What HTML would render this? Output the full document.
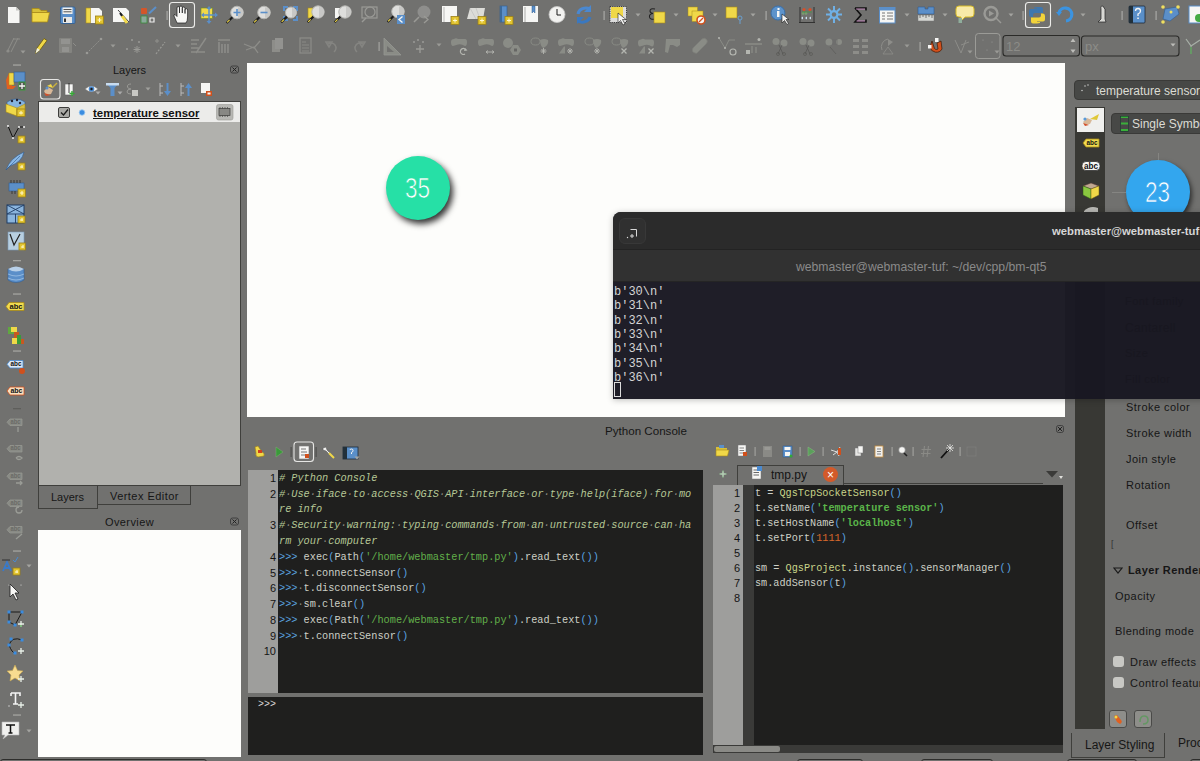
<!DOCTYPE html><html><head><meta charset="utf-8"><style>
html,body{margin:0;padding:0}
body{width:1200px;height:761px;overflow:hidden;position:relative;background:#71716f;font-family:"Liberation Sans",sans-serif}
body div,body svg{position:absolute}
span{position:static}
.t{white-space:pre;line-height:1}
.m{font-family:"Liberation Mono",monospace}
</style></head><body>
<div style="left:247px;top:63px;width:818px;height:354px;background:#fdfdfb"></div>
<div class="t" style="left:113px;top:65px;font-size:11px;color:#161616">Layers</div>
<div style="left:38px;top:101px;width:203px;height:385px;background:#b1b1ad;border:1px solid #3f3f3c;box-sizing:border-box"></div>
<div style="left:39px;top:102px;width:201px;height:20px;background:#ececea"></div>
<div style="left:58px;top:107px;width:12px;height:11px;background:#a9a9a5;border:1px solid #3c3c3a;border-radius:2px;box-sizing:border-box"></div>
<div class="t" style="left:93px;top:108px;font-size:11.4px;font-weight:bold;color:#111;text-decoration:underline">temperature sensor</div>
<div style="left:38px;top:485px;width:60px;height:24px;border:1px solid #3f3f3c;box-sizing:border-box;background:#71716f"></div>
<div class="t" style="left:51px;top:492px;font-size:11px;color:#161616">Layers</div>
<div style="left:97px;top:485px;width:94px;height:20px;border:1px solid #3f3f3c;box-sizing:border-box;background:#71716f"></div>
<div class="t" style="left:110px;top:491px;font-size:11px;color:#161616;letter-spacing:.45px">Vertex Editor</div>
<div class="t" style="left:105px;top:517px;font-size:11px;color:#161616;letter-spacing:.4px">Overview</div>
<div style="left:38px;top:530px;width:203px;height:227px;background:#fdfdfb"></div>
<div class="t" style="left:605px;top:425px;font-size:11.6px;color:#161616">Python Console</div>
<div style="left:248px;top:470px;width:455px;height:223px;background:#1f1f1e"></div>
<div style="left:248px;top:470px;width:30px;height:223px;background:#9e9e9c"></div>
<div style="left:248px;top:697px;width:455px;height:58px;background:#1f1f1e"></div>
<div style="left:713px;top:485px;width:30px;height:260px;background:#9e9e9c"></div>
<div style="left:743px;top:485px;width:11px;height:260px;background:#3a3a38"></div>
<div style="left:754px;top:485px;width:309px;height:260px;background:#1f1f1e"></div>
<div style="left:713px;top:745px;width:350px;height:8px;background:#3a3a38"></div>
<div style="left:714px;top:746px;width:66px;height:6px;background:#8a8a86;border-radius:2px"></div>
<div class="t" style="left:279px;top:473px;font-size:10.25px;font-family:'Liberation Mono',monospace"><span style="color:#b6c896;font-style:italic"># Python Console</span></div>
<div class="t" style="left:279px;top:489px;font-size:10.25px;font-family:'Liberation Mono',monospace"><span style="color:#b6c896;font-style:italic">#<span style="color:#8a8a80">·</span>Use<span style="color:#8a8a80">·</span>iface<span style="color:#8a8a80">·</span>to<span style="color:#8a8a80">·</span>access<span style="color:#8a8a80">·</span>QGIS<span style="color:#8a8a80">·</span>API<span style="color:#8a8a80">·</span>interface<span style="color:#8a8a80">·</span>or<span style="color:#8a8a80">·</span>type<span style="color:#8a8a80">·</span>help(iface)<span style="color:#8a8a80">·</span>for<span style="color:#8a8a80">·</span>mo</span></div>
<div class="t" style="left:279px;top:504px;font-size:10.25px;font-family:'Liberation Mono',monospace"><span style="color:#b6c896;font-style:italic">re info</span></div>
<div class="t" style="left:279px;top:520px;font-size:10.25px;font-family:'Liberation Mono',monospace"><span style="color:#b6c896;font-style:italic">#<span style="color:#8a8a80">·</span>Security<span style="color:#8a8a80">·</span>warning:<span style="color:#8a8a80">·</span>typing<span style="color:#8a8a80">·</span>commands<span style="color:#8a8a80">·</span>from<span style="color:#8a8a80">·</span>an<span style="color:#8a8a80">·</span>untrusted<span style="color:#8a8a80">·</span>source<span style="color:#8a8a80">·</span>can<span style="color:#8a8a80">·</span>ha</span></div>
<div class="t" style="left:279px;top:536px;font-size:10.25px;font-family:'Liberation Mono',monospace"><span style="color:#b6c896;font-style:italic">rm your</span><span style="color:#8a8a80">·</span><span style="color:#b6c896;font-style:italic">computer</span></div>
<div class="t" style="left:279px;top:552px;font-size:10.25px;font-family:'Liberation Mono',monospace"><span style="color:#5aa3e0">&gt;&gt;&gt;</span> <span style="color:#cdd0c6">exec</span><span style="color:#5aa3e0">(</span><span style="color:#cdd0c6">Path</span><span style="color:#5aa3e0">(</span><span style="color:#62b04a">'/home/webmaster/tmp.py'</span><span style="color:#5aa3e0">)</span><span style="color:#cdd0c6">.read_text</span><span style="color:#5aa3e0">())</span></div>
<div class="t" style="left:279px;top:568px;font-size:10.25px;font-family:'Liberation Mono',monospace"><span style="color:#5aa3e0">&gt;&gt;&gt;</span><span style="color:#8a8a80">·</span><span style="color:#cdd0c6">t.connectSensor</span><span style="color:#5aa3e0">()</span></div>
<div class="t" style="left:279px;top:583px;font-size:10.25px;font-family:'Liberation Mono',monospace"><span style="color:#5aa3e0">&gt;&gt;&gt;</span><span style="color:#8a8a80">·</span><span style="color:#cdd0c6">t.disconnectSensor</span><span style="color:#5aa3e0">()</span></div>
<div class="t" style="left:279px;top:599px;font-size:10.25px;font-family:'Liberation Mono',monospace"><span style="color:#5aa3e0">&gt;&gt;&gt;</span><span style="color:#8a8a80">·</span><span style="color:#cdd0c6">sm.clear</span><span style="color:#5aa3e0">()</span></div>
<div class="t" style="left:279px;top:615px;font-size:10.25px;font-family:'Liberation Mono',monospace"><span style="color:#5aa3e0">&gt;&gt;&gt;</span> <span style="color:#cdd0c6">exec</span><span style="color:#5aa3e0">(</span><span style="color:#cdd0c6">Path</span><span style="color:#5aa3e0">(</span><span style="color:#62b04a">'/home/webmaster/tmp.py'</span><span style="color:#5aa3e0">)</span><span style="color:#cdd0c6">.read_text</span><span style="color:#5aa3e0">())</span></div>
<div class="t" style="left:279px;top:631px;font-size:10.25px;font-family:'Liberation Mono',monospace"><span style="color:#5aa3e0">&gt;&gt;&gt;</span><span style="color:#8a8a80">·</span><span style="color:#cdd0c6">t.connectSensor</span><span style="color:#5aa3e0">()</span></div>
<div class="t" style="left:248px;top:473px;width:28px;text-align:right;font-size:11px;color:#141414">1</div>
<div class="t" style="left:248px;top:489px;width:28px;text-align:right;font-size:11px;color:#141414">2</div>
<div class="t" style="left:248px;top:520px;width:28px;text-align:right;font-size:11px;color:#141414">3</div>
<div class="t" style="left:248px;top:552px;width:28px;text-align:right;font-size:11px;color:#141414">4</div>
<div class="t" style="left:248px;top:568px;width:28px;text-align:right;font-size:11px;color:#141414">5</div>
<div class="t" style="left:248px;top:583px;width:28px;text-align:right;font-size:11px;color:#141414">6</div>
<div class="t" style="left:248px;top:599px;width:28px;text-align:right;font-size:11px;color:#141414">7</div>
<div class="t" style="left:248px;top:615px;width:28px;text-align:right;font-size:11px;color:#141414">8</div>
<div class="t" style="left:248px;top:631px;width:28px;text-align:right;font-size:11px;color:#141414">9</div>
<div class="t" style="left:248px;top:646px;width:28px;text-align:right;font-size:11px;color:#141414">10</div>
<div class="t" style="left:258px;top:700px;font-size:10px;color:#d8d8d8;font-family:'Liberation Mono',monospace">&gt;&gt;&gt;</div>
<div class="t" style="left:755px;top:489px;font-size:10.2px;font-family:'Liberation Mono',monospace"><span style="color:#cdd0c6">t</span> <span style="color:#cdd0c6">=</span> <span style="color:#c9d58a">QgsTcpSocketSensor</span><span style="color:#5aa3e0">()</span></div>
<div class="t" style="left:755px;top:504px;font-size:10.2px;font-family:'Liberation Mono',monospace"><span style="color:#cdd0c6">t.setName</span><span style="color:#5aa3e0">(</span><span style="color:#5bb54a;font-weight:bold">'temperature sensor'</span><span style="color:#5aa3e0">)</span></div>
<div class="t" style="left:755px;top:519px;font-size:10.2px;font-family:'Liberation Mono',monospace"><span style="color:#cdd0c6">t.setHostName</span><span style="color:#5aa3e0">(</span><span style="color:#5bb54a;font-weight:bold">'localhost'</span><span style="color:#5aa3e0">)</span></div>
<div class="t" style="left:755px;top:534px;font-size:10.2px;font-family:'Liberation Mono',monospace"><span style="color:#cdd0c6">t.setPort</span><span style="color:#5aa3e0">(</span><span style="color:#d9692c">1111</span><span style="color:#5aa3e0">)</span></div>
<div class="t" style="left:755px;top:564px;font-size:10.2px;font-family:'Liberation Mono',monospace"><span style="color:#cdd0c6">sm</span> <span style="color:#cdd0c6">=</span> <span style="color:#c9d58a">QgsProject</span><span style="color:#cdd0c6">.instance</span><span style="color:#5aa3e0">()</span><span style="color:#cdd0c6">.sensorManager</span><span style="color:#5aa3e0">()</span></div>
<div class="t" style="left:755px;top:579px;font-size:10.2px;font-family:'Liberation Mono',monospace"><span style="color:#cdd0c6">sm.addSensor</span><span style="color:#5aa3e0">(</span><span style="color:#cdd0c6">t</span><span style="color:#5aa3e0">)</span></div>
<div class="t" style="left:713px;top:488px;width:27px;text-align:right;font-size:11px;color:#141414">1</div>
<div class="t" style="left:713px;top:503px;width:27px;text-align:right;font-size:11px;color:#141414">2</div>
<div class="t" style="left:713px;top:518px;width:27px;text-align:right;font-size:11px;color:#141414">3</div>
<div class="t" style="left:713px;top:533px;width:27px;text-align:right;font-size:11px;color:#141414">4</div>
<div class="t" style="left:713px;top:548px;width:27px;text-align:right;font-size:11px;color:#141414">5</div>
<div class="t" style="left:713px;top:563px;width:27px;text-align:right;font-size:11px;color:#141414">6</div>
<div class="t" style="left:713px;top:578px;width:27px;text-align:right;font-size:11px;color:#141414">7</div>
<div class="t" style="left:713px;top:593px;width:27px;text-align:right;font-size:11px;color:#141414">8</div>
<div style="left:737px;top:465px;width:107px;height:20px;border:1px solid #3f3f3c;border-bottom:none;box-sizing:border-box;background:#71716f"></div>
<div class="t" style="left:771px;top:469px;font-size:12px;color:#141414">tmp.py</div>
<div style="left:823px;top:467px;width:15px;height:15px;border-radius:50%;background:#d35a2a"></div>
<div class="t" style="left:827px;top:469px;font-size:12px;color:#fff">×</div>
<div style="left:843px;top:483px;width:200px;height:1px;background:#3f3f3c"></div>
<div style="left:1074px;top:80px;width:140px;height:20px;background:#474846;border:1px solid #3a3a38;border-radius:4px;box-sizing:border-box"></div>
<div class="t" style="left:1096px;top:85px;font-size:12px;color:#dcdcd4">temperature sensor</div>
<div style="left:1075px;top:107px;width:30px;height:622px;background:#383834"></div>
<div style="left:1077px;top:108px;width:27px;height:24px;background:#f0f0ee"></div>
<div style="left:1111px;top:113px;width:100px;height:21px;background:#474846;border:1px solid #3a3a38;border-radius:4px;box-sizing:border-box"></div>
<div class="t" style="left:1132px;top:118px;font-size:12px;color:#dcdcd4">Single Symbol</div>
<div style="left:1126px;top:160px;width:64px;height:64px;border-radius:50%;background:#33a6ee;box-shadow:2px 3px 5px rgba(0,0,0,.6)"></div>
<div class="t" style="left:1145px;top:177px;font-size:30px;color:#fff;-webkit-text-stroke:.7px #33a6ee;transform:scaleX(.75);transform-origin:0 0">23</div>
<div class="t" style="left:1126px;top:402px;font-size:11px;color:#161616;letter-spacing:.45px">Stroke color</div>
<div class="t" style="left:1126px;top:428px;font-size:11px;color:#161616;letter-spacing:.45px">Stroke width</div>
<div class="t" style="left:1126px;top:454px;font-size:11px;color:#161616;letter-spacing:.45px">Join style</div>
<div class="t" style="left:1126px;top:480px;font-size:11px;color:#161616;letter-spacing:.45px">Rotation</div>
<div class="t" style="left:1126px;top:520px;font-size:11px;color:#161616;letter-spacing:.45px">Offset</div>
<div class="t" style="left:1128px;top:565px;font-size:11px;font-weight:bold;color:#161616;letter-spacing:.4px">Layer Rendering</div>
<svg style="left:1113px;top:567px;" width="10" height="8" viewBox="0 0 10 8"><path d="M1 1H9L5 6Z" fill="none" stroke="#1a1a1a" stroke-width="1.2"/></svg>
<div class="t" style="left:1115px;top:591px;font-size:11px;color:#161616;letter-spacing:.45px">Opacity</div>
<div class="t" style="left:1115px;top:626px;font-size:11px;color:#161616;letter-spacing:.45px">Blending mode</div>
<div style="left:1113px;top:656px;width:11px;height:11px;background:#c8c8c4;border-radius:3px"></div>
<div class="t" style="left:1130px;top:657px;font-size:11px;color:#161616;letter-spacing:.45px">Draw effects</div>
<div style="left:1113px;top:677px;width:11px;height:11px;background:#c8c8c4;border-radius:3px"></div>
<div class="t" style="left:1130px;top:678px;font-size:11px;color:#161616;letter-spacing:.45px">Control feature rendering order</div>
<div style="left:1109px;top:710px;width:18px;height:18px;background:#8e8e8a;border:1px solid #4a4a48;border-radius:3px;box-sizing:border-box"></div>
<div style="left:1134px;top:710px;width:18px;height:18px;background:#8e8e8a;border:1px solid #4a4a48;border-radius:3px;box-sizing:border-box"></div>
<div style="left:1071px;top:733px;width:94px;height:25px;border:1px solid #3f3f3c;border-top:none;box-sizing:border-box"></div>
<div class="t" style="left:1085px;top:739px;font-size:12px;color:#161616">Layer Styling</div>
<div class="t" style="left:1178px;top:737px;font-size:12px;color:#161616">Processing</div>
<svg style="left:0;top:0" width="1200" height="761"><path d="M8 7H16L19.5 10.5V23H8Z" fill="#f6f6f4" /><path d="M16 7V10.5H19.5Z" fill="#c8c8c4" /><path d="M32 8.5H39L41 10.5H47V12.5H32Z" fill="#d8c038" stroke="#a88a18" stroke-width="0.8" /><path d="M32 12.5H49.5L47.5 22H32Z" fill="#f0d848" stroke="#a88a18" stroke-width="0.8" /><rect x="60.5" y="7" width="14.5" height="16.5" rx="1" fill="#5b8fc9" stroke="#2f5d92" stroke-width="0.8" /><rect x="62.5" y="7.5" width="10" height="6.5" rx="0" fill="#f0f0ee" /><line x1="63.5" y1="9.5" x2="71.5" y2="9.5" stroke="#555" stroke-width="1" /><line x1="63.5" y1="11.8" x2="71.5" y2="11.8" stroke="#555" stroke-width="1" /><rect x="63" y="17" width="9" height="6" rx="0" fill="#e8e8e6" /><rect x="64" y="18.5" width="2" height="3.5" rx="0" fill="#333" /><path d="M86 8H99L102 11V23H86Z" fill="#f6f6f4" /><rect x="86" y="8" width="4.5" height="15" rx="0" fill="#f0d848" stroke="#a88a18" stroke-width="0.6" /><rect x="95.5" y="16" width="8" height="8" rx="0" fill="#e2c430" stroke="#9c8018" stroke-width="0.8" /><path d="M97.5 20H101.5M99.5 18V22" fill="none" stroke="#fff8d0" stroke-width="1" /><path d="M113 8H126L129 11V22H113Z" fill="#f6f6f4" /><path d="M118 10L129 22" fill="none" stroke="#444" stroke-width="1" /><line x1="122" y1="16" x2="127" y2="23" stroke="#f0d848" stroke-width="3" /><line x1="120" y1="13" x2="122" y2="16" stroke="#1a1a1a" stroke-width="2" /><rect x="141" y="8" width="6" height="6" rx="1" fill="#d3562a" /><line x1="149" y1="13.5" x2="156" y2="7" stroke="#5b8fc9" stroke-width="2" /><rect x="141" y="16" width="6" height="7" rx="0" fill="#8aa89a" stroke="#3b8c3b" stroke-width="0.8" /><path d="M150 18h4v4h-4z" fill="none" stroke="#eee" stroke-width="1.2" /><rect x="166.5" y="11" width="1.2" height="9" rx="0" fill="#a9a9a5" /><rect x="169.5" y="2.5" width="25" height="25" rx="3" fill="none" stroke="#ececea" stroke-width="1.1" /><path d="M177 23L174 16Q173.5 14.5 175 14.5L177 16.5V8Q177 6.5 178.3 6.5Q179.5 6.5 179.5 8V13V7.5Q179.5 6 181 6Q182.3 6 182.3 7.5V13V8.5Q182.3 7 183.6 7Q185 7 185 8.5V13.5V10Q185 8.7 186.3 8.7Q187.6 8.7 187.6 10V17Q187.6 21 186 23Z" fill="#f6f6f4" stroke="#1a1a1a" stroke-width="0.7" /><rect x="201" y="8" width="11.5" height="10.5" rx="0" fill="#f0d848" stroke="#6a8a20" stroke-width="0.6" /><path d="M209 6L211.5 9H206.5ZM209 24L211.5 21H206.5ZM201 15L204 12.5V17.5ZM218 15L215 12.5V17.5Z" fill="#5b8fc9" /><line x1="209" y1="8" x2="209" y2="22" stroke="#5b8fc9" stroke-width="1.5" /><line x1="202" y1="15" x2="216" y2="15" stroke="#5b8fc9" stroke-width="1.5" /><line x1="226.59" y1="22.91" x2="232.59" y2="16.91" stroke="#1a1a1a" stroke-width="2.2" /><line x1="227.09" y1="22.41" x2="229.59" y2="19.91" stroke="#f0d848" stroke-width="1.2" /><circle cx="237" cy="12.5" r="6.3" fill="#dededc" stroke="#b4b4b0" stroke-width="1"/><path d="M238 7.2A5.3 5.3 0 0 1 238 17.8Z" fill="#c8c8c6" /><path d="M233.5 12.5H240.5M237 9V16" fill="none" stroke="#5b8fc9" stroke-width="1.6" /><line x1="253.58999999999997" y1="22.91" x2="259.59" y2="16.91" stroke="#1a1a1a" stroke-width="2.2" /><line x1="254.08999999999997" y1="22.41" x2="256.59" y2="19.91" stroke="#f0d848" stroke-width="1.2" /><circle cx="264" cy="12.5" r="6.3" fill="#dededc" stroke="#b4b4b0" stroke-width="1"/><path d="M265 7.2A5.3 5.3 0 0 1 265 17.8Z" fill="#c8c8c6" /><path d="M260.5 12.5H267.5" fill="none" stroke="#5b8fc9" stroke-width="1.6" /><path d="M283 6H288V8H285V11H283ZM298 6H293V8H296V11H298ZM283 21H288V19H285V16H283ZM298 21H293V19H296V16H298Z" fill="#5b8fc9" /><line x1="281.15" y1="22.35" x2="287.15" y2="16.35" stroke="#1a1a1a" stroke-width="2.2" /><line x1="281.65" y1="21.85" x2="284.15" y2="19.35" stroke="#f0d848" stroke-width="1.2" /><circle cx="291" cy="12.5" r="5.5" fill="#dededc" stroke="#b4b4b0" stroke-width="1"/><path d="M292 8.0A4.5 4.5 0 0 1 292 17.0Z" fill="#c8c8c6" /><rect x="308" y="8" width="5" height="10" rx="0" fill="#f0d848" stroke="#a88a18" stroke-width="0.6" /><line x1="307.66" y1="22.34" x2="313.66" y2="16.34" stroke="#1a1a1a" stroke-width="2.2" /><line x1="308.16" y1="21.84" x2="310.66" y2="19.34" stroke="#f0d848" stroke-width="1.2" /><circle cx="318" cy="12" r="6.2" fill="#dededc" stroke="#b4b4b0" stroke-width="1"/><path d="M319 6.8A5.2 5.2 0 0 1 319 17.2Z" fill="#c8c8c6" /><rect x="335" y="8" width="5" height="10" rx="0" fill="#f6f6f4" /><line x1="334.66" y1="22.34" x2="340.66" y2="16.34" stroke="#1a1a1a" stroke-width="2.2" /><line x1="335.16" y1="21.84" x2="337.66" y2="19.34" stroke="#f0d848" stroke-width="1.2" /><circle cx="345" cy="12" r="6.2" fill="#dededc" stroke="#b4b4b0" stroke-width="1"/><path d="M346 6.8A5.2 5.2 0 0 1 346 17.2Z" fill="#c8c8c6" /><rect x="362" y="7" width="15" height="11" rx="0" fill="none" stroke="#9a9a96" stroke-width="1.2" /><circle cx="370" cy="12" r="5" fill="none" stroke="#9a9a96" stroke-width="1.2"/><line x1="362" y1="22" x2="366" y2="18" stroke="#9a9a96" stroke-width="1.5" /><line x1="387.59" y1="21.91" x2="393.59" y2="15.91" stroke="#1a1a1a" stroke-width="2.2" /><line x1="388.09" y1="21.41" x2="390.59" y2="18.91" stroke="#f0d848" stroke-width="1.2" /><circle cx="398" cy="11.5" r="6.3" fill="#dededc" stroke="#b4b4b0" stroke-width="1"/><path d="M399 6.2A5.3 5.3 0 0 1 399 16.8Z" fill="#c8c8c6" /><rect x="397" y="15" width="8" height="9" rx="0" fill="#5b8fc9" /><path d="M402.5 16.5L399 19.5L402.5 22.5" fill="none" stroke="#f6f6f4" stroke-width="1.4" /><circle cx="424" cy="12" r="6.5" fill="#8e8e8c"/><line x1="414" y1="22" x2="419" y2="17" stroke="#9a9a96" stroke-width="1.6" /><path d="M424 16L428 19.5L424 23" fill="none" stroke="#9a9a96" stroke-width="1.3" /><rect x="442" y="6" width="15" height="16" rx="0" fill="#f6f6f4" /><rect x="443" y="7" width="2" height="15" rx="0" fill="#d8d8d6" /><rect x="451" y="16.5" width="8" height="8" rx="0" fill="#e2c430" stroke="#9c8018" stroke-width="0.8" /><path d="M453 20.5H457M455 18.5V22.5" fill="none" stroke="#fff8d0" stroke-width="1" /><path d="M470 8H485L483 19H467Z" fill="#dcdcd8" /><path d="M470 8L476 19M476 8L480 19" fill="none" stroke="#bbb" stroke-width="0.6" /><rect x="478" y="16.5" width="8" height="8" rx="0" fill="#e2c430" stroke="#9c8018" stroke-width="0.8" /><path d="M480 20.5H484M482 18.5V22.5" fill="none" stroke="#fff8d0" stroke-width="1" /><rect x="500" y="6" width="7" height="16" rx="0" fill="#5b8fc9" stroke="#2f5d92" stroke-width="0.6" /><rect x="500" y="6" width="2" height="16" rx="0" fill="#3d6a9a" /><rect x="505" y="16.5" width="8" height="8" rx="0" fill="#e2c430" stroke="#9c8018" stroke-width="0.8" /><path d="M507 20.5H511M509 18.5V22.5" fill="none" stroke="#fff8d0" stroke-width="1" /><rect x="523" y="6" width="15" height="16" rx="0" fill="#f6f6f4" /><rect x="524" y="7" width="2" height="15" rx="0" fill="#d0d0ce" /><path d="M532 6V13L533.5 11.5L535 13V6Z" fill="#5b8fc9" stroke="#2f5d92" stroke-width="0.5" /><circle cx="557" cy="14.5" r="8" fill="#f2f2f0" stroke="#c8c8c6" stroke-width="0.8"/><path d="M557 9V15H561" fill="none" stroke="#1a1a1a" stroke-width="1" /><path d="M578 14A8 7 0 0 1 590 9" fill="none" stroke="#4a88d0" stroke-width="3" /><path d="M591 5V12H584Z" fill="#4a88d0" /><path d="M590 17A8 7 0 0 1 578 21" fill="none" stroke="#3a78c0" stroke-width="3" /><path d="M577 24V17H584Z" fill="#3a78c0" /><rect x="603.5" y="11" width="1.2" height="9" rx="0" fill="#a9a9a5" /><rect x="610" y="6.5" width="16.5" height="16" rx="0" fill="#dcdcdc" stroke="#222" stroke-width="0.8" stroke-dasharray="1.2 1"/><rect x="611" y="7" width="12" height="11" rx="0" fill="#f0d848" /><path d="M618 13L618 23L620.5 20.5L623 25L625 24L622.5 19.5H626Z" fill="#f6f6f4" stroke="#1a1a1a" stroke-width="0.6" /><path d="M635.5 13.5H640.5L638 16.5Z" fill="#a4a4a0" /><path d="M655 9Q650 8 650 11Q650 13 653 13.5Q649 14 649.5 17Q650 20 655 19" fill="none" stroke="#222" stroke-width="1.1" /><rect x="654" y="12" width="11" height="11" rx="0" fill="#f0d848" stroke="#a88a18" stroke-width="0.6" /><path d="M673.5 13.5H678.5L676 16.5Z" fill="#a4a4a0" /><rect x="688" y="7" width="9.5" height="9" rx="0" fill="#f0d848" stroke="#a88a18" stroke-width="0.5" /><rect x="692" y="11" width="11" height="10.5" rx="0" fill="#f0d848" stroke="#a88a18" stroke-width="0.5" /><circle cx="701" cy="20" r="4" fill="#f6f6f4" stroke="#d0501c" stroke-width="1.6"/><line x1="699" y1="22" x2="703" y2="18" stroke="#d0501c" stroke-width="1.2" /><path d="M712.5 13.5H717.5L715 16.5Z" fill="#a4a4a0" /><rect x="726" y="7" width="11" height="11" rx="0" fill="#f0d848" stroke="#a88a18" stroke-width="0.6" /><circle cx="740" cy="18" r="2" fill="none" stroke="#6aa0d0" stroke-width="1"/><line x1="740" y1="20" x2="740" y2="24" stroke="#6aa0d0" stroke-width="1" /><path d="M750.5 13.5H755.5L753 16.5Z" fill="#a4a4a0" /><rect x="765.5" y="11" width="1.2" height="9" rx="0" fill="#a9a9a5" /><circle cx="778" cy="13" r="7" fill="#5d93cb" stroke="#3a6fa8" stroke-width="1"/><path d="M777 11H779.5V17H777ZM777.5 8H779.5V10H777.5Z" fill="#f6f6f4" /><path d="M782 14V23L784.5 20.5L787 24.5L788.5 23.5L786 19.5H789Z" fill="#f6f6f4" stroke="#1a1a1a" stroke-width="0.6" /><path d="M800 7V22M814 7V22M799 22.5H815" fill="none" stroke="#222" stroke-width="0.8" /><circle cx="804" cy="9.5" r="1.6" fill="#d8502a"/><circle cx="810" cy="9.5" r="1.6" fill="#d8502a"/><circle cx="803" cy="13.5" r="1.4" fill="#7a9a70"/><circle cx="806" cy="13.5" r="1.4" fill="#7a9a70"/><line x1="802" y1="12" x2="812" y2="12" stroke="#3a3" stroke-width="0.6" /><path d="M801 18L803 16.5V19.5ZM805 18L807 16.5V19.5ZM809 18L811 16.5V19.5Z" fill="#cfe4f4" /><path d="M834 6V23M826 14.5H842M828 8.5L840 20.5M840 8.5L828 20.5" fill="none" stroke="#6fb0e6" stroke-width="2" /><circle cx="834" cy="14.5" r="4.5" fill="#6fb0e6"/><circle cx="834" cy="14.5" r="2.2" fill="#71716f"/><path d="M855 8H866V10.5M855 8L861 15L855 22H866V19.5" fill="none" stroke="#111" stroke-width="1.6" /><path d="M856 9H865M856.5 21H865" fill="none" stroke="#d890d0" stroke-width="0.8" /><rect x="879.5" y="7.5" width="15.5" height="15.5" rx="0" fill="#f6f6f4" stroke="#5b8fc9" stroke-width="1" /><rect x="879.5" y="7.5" width="15.5" height="3" rx="0" fill="#5b8fc9" /><path d="M882 13H885M887 13H893M882 16H885M887 16H893M882 19H885M887 19H893" fill="none" stroke="#555" stroke-width="0.8" /><path d="M904.5 13.5H909.5L907 16.5Z" fill="#a4a4a0" /><path d="M918 7H925V9H928V7H934V14H918Z" fill="#5b8fc9" stroke="#2f5d92" stroke-width="0.6" /><rect x="918" y="15" width="16" height="6" rx="0" fill="#d6d8d4" stroke="#777" stroke-width="0.5" /><path d="M920 15V18M923 15V17M926 15V18M929 15V17M932 15V18" fill="none" stroke="#333" stroke-width="0.6" /><path d="M942.5 13.5H947.5L945 16.5Z" fill="#a4a4a0" /><path d="M959 6H971Q974 6 974 9V14Q974 17 971 17H965L961 21V17H959Q956 17 956 14V9Q956 6 959 6Z" fill="#f8eaa8" stroke="#d8bc28" stroke-width="1" /><rect x="958.5" y="18" width="3.5" height="5" rx="0" fill="#8fae9c" /><circle cx="991" cy="13.5" r="6.5" fill="none" stroke="#9a9a96" stroke-width="2.4"/><path d="M989 10.5L994 13.5L989 16.5Z" fill="#9a9a96" /><line x1="996" y1="18" x2="1001" y2="23" stroke="#9a9a96" stroke-width="1.4" /><path d="M1008.5 13.5H1013.5L1011 16.5Z" fill="#a4a4a0" /><rect x="1022.5" y="11" width="1.2" height="9" rx="0" fill="#a9a9a5" /><rect x="1025.5" y="2.5" width="25" height="25" rx="3" fill="none" stroke="#ececea" stroke-width="1.1" /><path d="M1037 7H1041Q1043 7 1043 9V13H1035Q1033 13 1033 15V17H1031Q1029 17 1029 14.5V11Q1029 9 1031 9H1037V8.5H1034V7.5Z" fill="#3f77ae" /><path d="M1037 23.5H1033Q1031 23.5 1031 21.5V17.5H1039Q1041 17.5 1041 15.5V13.5H1043Q1045 13.5 1045 16V19.5Q1045 21.5 1043 21.5H1037V22H1040V23Z" fill="#f2d33a" /><path d="M1059 13A6.5 6.5 0 1 1 1066 21" fill="none" stroke="#3b93e0" stroke-width="3.2" /><path d="M1056 12H1062L1059 16Z" fill="#3b93e0" /><path d="M1080.5 13.5H1085.5L1083 16.5Z" fill="#a4a4a0" /><path d="M1102 6Q1104 6 1104 8L1105 9V19L1106 22H1098L1101 19V9Q1100 6 1102 6Z" fill="#d8d8d4" stroke="#222" stroke-width="0.7" /><rect x="1121.5" y="11" width="1.2" height="9" rx="0" fill="#a9a9a5" /><rect x="1129" y="6" width="16" height="17" rx="1" fill="#5a8fc8" stroke="#1d2a38" stroke-width="0.8" /><rect x="1129" y="6" width="4" height="17" rx="0" fill="#22303a" /><path d="M1135.5 11Q1135.5 8.5 1138 8.5Q1140.5 8.5 1140.5 11Q1140.5 13 1138 14V16" fill="none" stroke="#f6f6f4" stroke-width="1.3" /><rect x="1137.3" y="17.5" width="1.5" height="1.5" rx="0" fill="#f6f6f4" /><rect x="1155.5" y="11" width="1.2" height="9" rx="0" fill="#a9a9a5" /><path d="M1165 9L1177 7L1179 14L1170 21L1163 19Z" fill="#5b8fc9" stroke="#2f5d92" stroke-width="0.6" /><circle cx="1163" cy="7" r="1.8" fill="#f0e060"/><circle cx="1178" cy="7" r="1.8" fill="#f0e060"/><circle cx="1163" cy="22" r="1.8" fill="#f0e060"/><circle cx="1171" cy="12" r="1.5" fill="#f0e060"/><rect x="1189" y="6" width="13" height="17" rx="0" fill="#f6f6f4" stroke="#5b8fc9" stroke-width="1" /><circle cx="1199" cy="18" r="4" fill="#44aa44"/><path d="M7 52L14 38M11 52L18 38M13 39H20" fill="none" stroke="#8d8d89" stroke-width="1" /><circle cx="8" cy="51" r="1.6" fill="#8d8d89"/><path d="M20.5 50.5H25.5L23 53.5Z" fill="#9a9a96" /><path d="M35.5 53.5L37 48L44 38.5L47 40.5L40 50Z" fill="#f0d848" stroke="#6a5a10" stroke-width="0.8" /><path d="M35.5 53.5L37 48L40 50Z" fill="#f0f0e0" /><rect x="59" y="38" width="13" height="15" rx="1" fill="#848480" /><rect x="61" y="39" width="9" height="5" rx="0" fill="#939390" /><rect x="62" y="47" width="7" height="5" rx="0" fill="#939390" /><line x1="73" y1="43" x2="76" y2="46" stroke="#8d8d89" stroke-width="1" /><path d="M87 53L101 39" fill="none" stroke="#9a9a96" stroke-width="1" stroke-dasharray="1.5 1.5"/><circle cx="87" cy="53" r="1.3" fill="#9a9a96"/><circle cx="101" cy="39" r="1.3" fill="#9a9a96"/><path d="M110.5 44.5H115.5L113 47.5Z" fill="#9a9a96" /><circle cx="127" cy="49" r="1" fill="#9a9a96"/><circle cx="132" cy="40" r="1" fill="#9a9a96"/><circle cx="139" cy="42" r="1" fill="#9a9a96"/><path d="M137 46V53M133.5 49.5H140.5M134.5 47L139.5 52M139.5 47L134.5 52" fill="none" stroke="#9a9a96" stroke-width="1" /><path d="M156 54L165 42" fill="none" stroke="#9a9a96" stroke-width="1.2" stroke-dasharray="2 1.5"/><circle cx="157" cy="41" r="1.2" fill="none" stroke="#9a9a96" stroke-width="0.8"/><path d="M175.5 44.5H180.5L178 47.5Z" fill="#9a9a96" /><path d="M191 40H199M191 44H197M191 48H199M191 52H205M196 53L206 38" fill="none" stroke="#8d8d89" stroke-width="1.5" /><path d="M218 40H230M219 42V53M222 44V53M225 44V53M228 44V53" fill="none" stroke="#8d8d89" stroke-width="1.6" /><path d="M244 44L254 48L260 41M246 50L254 47L258 53" fill="none" stroke="#8d8d89" stroke-width="1.3" /><rect x="272" y="40" width="8" height="12" rx="0" fill="#8d8d89" /><rect x="275" y="38" width="8" height="11" rx="0" fill="#939390" /><rect x="300" y="38" width="11" height="15" rx="0" fill="none" stroke="#8d8d89" stroke-width="1.2" /><path d="M302 42H306M302 45H309M302 48H309M302 51H309" fill="none" stroke="#8d8d89" stroke-width="0.9" /><path d="M328 44A5 5 0 1 1 334 52M326 42L329 47L332 42Z" fill="none" stroke="#8d8d89" stroke-width="1.5" opacity=".7"/><path d="M363 44A5 5 0 1 0 357 52M365 42L362 47L359 42Z" fill="none" stroke="#8d8d89" stroke-width="1.5" opacity=".7"/><rect x="378.5" y="42" width="1.2" height="9" rx="0" fill="#a4a4a0" /><path d="M384 38L401 55H384Z" fill="#8a8c86" stroke="#959792" stroke-width="0.8" /><path d="M387 46L394 52H387Z" fill="#71716f" /><circle cx="414" cy="42" r="1" fill="#9a9a96"/><circle cx="418" cy="40" r="1" fill="#9a9a96"/><circle cx="423" cy="42" r="1" fill="#9a9a96"/><path d="M420 45V53M416 49H424" fill="none" stroke="#9a9a96" stroke-width="1.4" /><path d="M436.5 43.5H441.5L439 46.5Z" fill="#9a9a96" /><path d="M453 46Q451 46 451 42.0Q451 39 454 39Q456 37.5 458 39H465Q467 39 467 42.0Q467 46 465 46Q461.0 43.5 458.0 44.5Z" fill="#8a8c86" /><path d="M466 50A3 3 0 1 0 465 54" fill="none" stroke="#b4b6b0" stroke-width="1.2" /><path d="M465 48L467.5 50.5L464 51Z" fill="#b4b6b0" /><path d="M480 46Q478 46 478 42.0Q478 39 481 39Q483 37.5 485 39H492Q494 39 494 42.0Q494 46 492 46Q488.0 43.5 485.0 44.5Z" fill="#8a8c86" /><path d="M486 52H494M486 52L488 50.5M486 52L488 53.5M494 52L492 50.5M494 52L492 53.5" fill="none" stroke="#b4b6b0" stroke-width="0.9" /><circle cx="508" cy="43" r="5" fill="#8a8c86"/><path d="M513 45H518L521 50L518 55H513L510 50Z" fill="#8a8c86" /><rect x="514" y="48.5" width="3" height="3" rx="0" fill="#666664" /><path d="M535.5 38Q540 38 540 41.5Q540 45 535.5 45Q531 45 531 41.5Q531 38 535.5 38Z" fill="none" stroke="#8a8c86" stroke-width="0.9" /><path d="M540 40Q544 38 548 40Q549 44 545 47L543 48Q540 45 540 40Z" fill="#8a8c86" /><path d="M543.5 48V54M540.5 51H546.5M541.5 49L545.5 53M545.5 49L541.5 53" fill="none" stroke="#b4b6b0" stroke-width="0.9" /><path d="M560 46Q558 46 558 42.0Q558 39 561 39Q563 37.5 565 39H572Q574 39 574 42.0Q574 46 572 46Q568.0 43.5 565.0 44.5Z" fill="#8a8c86" /><path d="M559 53.5L564 46.5H565V53.5Z" fill="#8a8c86" /><path d="M570 48V54M567 51H573M568 49L572 53M572 49L568 53" fill="none" stroke="#b4b6b0" stroke-width="0.9" /><path d="M589.5 38Q594 38 594 41.5Q594 45 589.5 45Q585 45 585 41.5Q585 38 589.5 38Z" fill="none" stroke="#8a8c86" stroke-width="0.9" /><path d="M593 40Q597 38 601 40Q602 44 598 47L596 48Q593 45 593 40Z" fill="#8a8c86" /><path d="M597 48V54M594 51H600M595 49L599 53M599 49L595 53" fill="none" stroke="#b4b6b0" stroke-width="0.9" /><path d="M616.5 38Q621 38 621 41.5Q621 45 616.5 45Q612 45 612 41.5Q612 38 616.5 38Z" fill="none" stroke="#8a8c86" stroke-width="0.9" /><path d="M620 40Q624 38 628 40Q629 44 625 47L623 48Q620 45 620 40Z" fill="#8a8c86" /><path d="M621.5 48.5L626.5 53.5M626.5 48.5L621.5 53.5" fill="none" stroke="#b4b6b0" stroke-width="1.3" /><path d="M640 46.5Q638 46.5 638 42.5Q638 39.5 641 39.5Q643 38.0 645 39.5H652Q654 39.5 654 42.5Q654 46.5 652 46.5Q648.0 44.0 645.0 45.0Z" fill="#8a8c86" /><path d="M639 53.5L644 46.5H645V53.5Z" fill="#8a8c86" /><path d="M648.5 48.5L653.5 53.5M653.5 48.5L648.5 53.5" fill="none" stroke="#b4b6b0" stroke-width="1.3" /><path d="M666 39H680V45L677 47L673 45H670L668 53L665 52Z" fill="#8a8c86" /><path d="M695 53Q691 52 693 48L702 39Q705 37 707 40Q708 42 706 44L698 52Q697 54 695 53Z" fill="#8a8c86" stroke="#7d7f7a" stroke-width="0.8" /><path d="M719 38L725 48L729 40H735" fill="none" stroke="#8a8c86" stroke-width="1" /><circle cx="719" cy="38" r="1" fill="#b4b6b0"/><circle cx="725" cy="48" r="1" fill="#b4b6b0"/><circle cx="733" cy="52" r="3" fill="none" stroke="#b4b6b0" stroke-width="1.2"/><path d="M745 44H762M752 46V53M756 47V53" fill="none" stroke="#8a8c86" stroke-width="1.3" /><rect x="746" y="50" width="4" height="4" rx="0" fill="#b4b6b0" /><circle cx="759" cy="39.5" r="1.5" fill="#b4b6b0"/><circle cx="776" cy="41.5" r="3.5" fill="#8a8c86"/><circle cx="784" cy="43" r="3.5" fill="#8a8c86"/><path d="M779 45L783 54M782 45L778 54" fill="none" stroke="#555553" stroke-width="0.7" /><circle cx="778" cy="54" r="1.5" fill="none" stroke="#555553" stroke-width="0.6"/><circle cx="784" cy="54" r="1.5" fill="none" stroke="#555553" stroke-width="0.6"/><circle cx="803" cy="41.5" r="3.5" fill="#8a8c86"/><circle cx="811" cy="43" r="3.5" fill="#8a8c86"/><path d="M806 45L810 54M809 45L805 54" fill="none" stroke="#555553" stroke-width="0.7" /><circle cx="805" cy="54" r="1.5" fill="none" stroke="#555553" stroke-width="0.6"/><circle cx="811" cy="54" r="1.5" fill="none" stroke="#555553" stroke-width="0.6"/><circle cx="829" cy="42" r="3.5" fill="#8a8c86"/><circle cx="839" cy="42" r="3" fill="#8a8c86"/><path d="M832 40H838M832 42H838M832 44H838" fill="none" stroke="#6a6a68" stroke-width="0.6" /><line x1="830" y1="47" x2="836" y2="54" stroke="#5d5d5b" stroke-width="0.8" /><path d="M853 39h6v3h-6zM862 39h6v3h-6zM853 45h6v3h-6zM862 45h6v3h-6zM853 51h6v3h-6zM862 51h6v3h-6z" fill="#8d8d89" /><path d="M888 39A8 8 0 0 0 882 50" fill="none" stroke="#8d8d89" stroke-width="1" /><path d="M888 39V46L893 42Z" fill="#8d8d89" /><path d="M883 54L888 47L893 54Z" fill="none" stroke="#8d8d89" stroke-width="0.8" /><path d="M904.5 44.5H909.5L907 47.5Z" fill="#9a9a96" /><rect x="919.5" y="42" width="1.2" height="9" rx="0" fill="#a8a8a4" /><path d="M930 47A6.5 6.5 0 0 0 942 49L941 41L937 43L938 49A2.5 2.5 0 0 1 934 47L932 41Z" fill="#d4501c" stroke="#3a1a08" stroke-width="0.7" /><rect x="935" y="38" width="3.5" height="4" rx="0" fill="#f6f6f4" /><rect x="928" y="45" width="3.5" height="3.5" rx="0" fill="#f6f6f4" /><path d="M955 40L961 53L966 40M961 45L969 42" fill="none" stroke="#8d8d89" stroke-width="1" /><path d="M967.5 50.5H972.5L970 53.5Z" fill="#9a9a96" /><rect x="975.5" y="33.5" width="24.5" height="25" rx="3" fill="none" stroke="#a0a09c" stroke-width="0.9" /><circle cx="983" cy="40" r="0.6" fill="#9a9a96"/><circle cx="992" cy="42" r="0.6" fill="#9a9a96"/><circle cx="987" cy="50" r="0.6" fill="#9a9a96"/><path d="M994.5 50.5H999.5L997 53.5Z" fill="#9a9a96" /><rect x="1003" y="35.5" width="76.5" height="20.5" rx="3" fill="none" stroke="#2a2a28" stroke-width="1.1" /><path d="M1073 38.5L1075.5 42H1070.5ZM1073 53L1075.5 49.5H1070.5Z" fill="#bdbdb9" /><rect x="1081.5" y="36" width="97.5" height="20" rx="3" fill="none" stroke="#2a2a28" stroke-width="1.1" /><path d="M1170.5 43.5H1175.5L1173 46.5Z" fill="#bdbdb9" /><path d="M1186 39L1191 46V54M1191 46L1200 40" fill="none" stroke="#a8b0a8" stroke-width="1.2" /><line x1="1191" y1="47" x2="1191" y2="54" stroke="#3a9a3a" stroke-width="1" /><rect x="40.5" y="79.5" width="19.5" height="19.5" rx="3" fill="none" stroke="#e6e6e4" stroke-width="1.1" /><path d="M44 91L48 87L53 90L51 94L46 95Z" fill="#d8b898" /><path d="M44 93L51 95L46 96Z" fill="#d3502a" /><path d="M47 86L51 84L53 88Z" fill="#f0d848" /><line x1="52" y1="88" x2="57" y2="83" stroke="#c8b040" stroke-width="1.4" /><circle cx="47" cy="88" r="1.5" fill="#5b8fc9"/><rect x="65" y="84" width="8" height="11" rx="0" fill="#f6f6f4" stroke="#666" stroke-width="0.6" /><line x1="69" y1="83" x2="69" y2="93" stroke="#1a1a1a" stroke-width="0.8" /><path d="M72 91V96M69.5 93.5H74.5" fill="none" stroke="#3a3" stroke-width="1.4" /><path d="M85 89Q91.5 83 98 89Q91.5 95 85 89Z" fill="#f6f6f4" stroke="#777" stroke-width="0.6" /><circle cx="91.5" cy="89" r="2.8" fill="#4a8ad0"/><circle cx="91.5" cy="89" r="1.2" fill="#1a1a1a"/><path d="M95.5 91.5H100.5L98 94.5Z" fill="#aaa" /><path d="M106 83H119L114.5 88V96H110.5V88Z" fill="#5b8fc9" /><rect x="106" y="83" width="13" height="2.5" rx="0" fill="#c8dcf0" /><path d="M117.5 91.5H122.5L120 94.5Z" fill="#aaa" /><path d="M131 84Q127 84 127.5 87Q128 89 131 89Q127 89 127 92Q127 94 131 94" fill="none" stroke="#9a9a96" stroke-width="1" /><rect x="132" y="90" width="6" height="6" rx="0" fill="#c8c8c4" /><path d="M145.5 87.5H150.5L148 90.5Z" fill="#a0a09c" /><path d="M160 83V96M160 86H163M160 93H163" fill="none" stroke="#bbb" stroke-width="1" /><path d="M167.5 83V92" fill="none" stroke="#5b8fc9" stroke-width="2" /><path d="M164 91L167.5 96L171 91Z" fill="#5b8fc9" /><path d="M181 83V96M181 86H184M181 93H184" fill="none" stroke="#bbb" stroke-width="1" /><path d="M188.5 87V96" fill="none" stroke="#5b8fc9" stroke-width="2" /><path d="M185 88L188.5 83L192 88Z" fill="#5b8fc9" /><rect x="201" y="83" width="9" height="10" rx="0" fill="#f6f6f4" /><rect x="206" y="91" width="6" height="5" rx="0" fill="#d0501c" /><rect x="207.5" y="92.5" width="3" height="2" rx="0" fill="#f6f6f4" /><path d="M61 112.5L63.5 115L68 109.5" fill="none" stroke="#1a1a1a" stroke-width="1.3" /><circle cx="82" cy="112.5" r="2.8" fill="#3a8ce0" stroke="#9ac8f0" stroke-width="0.8"/><rect x="216.5" y="104.5" width="16.5" height="15.5" rx="2" fill="#b8b8b4" stroke="#9a9a96" stroke-width="0.6" /><rect x="219" y="108.5" width="11" height="7" rx="0" fill="#888884" stroke="#3a3a38" stroke-width="0.7" /><path d="M220 107V108.5M222.5 107V108.5M225 107V108.5M227.5 107V108.5M220 115.5V117M222.5 115.5V117M225 115.5V117M227.5 115.5V117" fill="none" stroke="#3a3a38" stroke-width="0.6" /><rect x="230.5" y="66" width="8" height="7" rx="2" fill="none" stroke="#333" stroke-width="0.8" /><path d="M232.5 67.5L236.5 71.5M236.5 67.5L232.5 71.5" fill="none" stroke="#222" stroke-width="1" /><rect x="230.5" y="518" width="8" height="7" rx="2" fill="none" stroke="#333" stroke-width="0.8" /><path d="M232.5 519.5L236.5 523.5M236.5 519.5L232.5 523.5" fill="none" stroke="#222" stroke-width="1" /><rect x="13" y="64.4" width="8" height="1.3" rx="0" fill="#a4a4a0" /><path d="M6 80L9 73H12V86H16L13 89H7Z" fill="#e06020" /><rect x="9" y="73" width="5" height="12" rx="0" fill="#f0d848" stroke="#a88a18" stroke-width="0.5" /><rect x="14" y="72" width="11" height="10" rx="0" fill="#5b8fc9" stroke="#2f5d92" stroke-width="0.6" /><rect x="19" y="82" width="6" height="8" rx="0" fill="#555" stroke="#3a3" stroke-width="0.8" /><path d="M22 83V89M19 86H25" fill="none" stroke="#f6f6f4" stroke-width="1.3" /><path d="M7 102Q16 96 25 102V106Q16 112 7 106Z" fill="#86b4e0" stroke="#2f5d92" stroke-width="0.6" /><circle cx="12" cy="101" r="1.2" fill="#223"/><circle cx="17" cy="100" r="1.2" fill="#223"/><circle cx="20" cy="103" r="1.2" fill="#223"/><path d="M6 104L17 108V116L6 112Z" fill="#f0d848" stroke="#a88a18" stroke-width="0.6" /><path d="M17 108L25 104V112L17 116Z" fill="#d8c040" stroke="#a88a18" stroke-width="0.6" /><rect x="17" y="109" width="8" height="7.5" rx="0" fill="#e2c430" stroke="#9c8018" stroke-width="0.8" /><path d="M19 113H23M21 111V114.5" fill="none" stroke="#fff8d0" stroke-width="1" /><path d="M8 126L13 138L19 127L24 127" fill="none" stroke="#111" stroke-width="1" /><circle cx="8" cy="126" r="1" fill="#f6f6f4"/><circle cx="13" cy="138" r="1" fill="#f6f6f4"/><circle cx="19" cy="127" r="1" fill="#f6f6f4"/><circle cx="24" cy="127" r="1" fill="#f6f6f4"/><rect x="18" y="136" width="7" height="7" rx="0" fill="#e2c430" stroke="#9c8018" stroke-width="0.8" /><path d="M20 140H23M22 138V141" fill="none" stroke="#fff8d0" stroke-width="1" /><path d="M6 170Q10 158 24 152Q22 162 10 166Z" fill="#8ab8e4" stroke="#2f5d92" stroke-width="0.6" /><line x1="6" y1="170" x2="20" y2="156" stroke="#2f5d92" stroke-width="0.6" /><rect x="18" y="163" width="7" height="7" rx="0" fill="#e2c430" stroke="#9c8018" stroke-width="0.8" /><path d="M20 167H23M22 165V168" fill="none" stroke="#fff8d0" stroke-width="1" /><rect x="9" y="183" width="15" height="8" rx="0" fill="#5b8fc9" stroke="#2f5d92" stroke-width="0.6" /><path d="M11 180V183M14 180V183M17 180V183M20 180V183M12 191V194M15 191V194" fill="none" stroke="#333" stroke-width="0.9" /><rect x="18" y="189" width="7.5" height="8" rx="0" fill="#e2c430" stroke="#9c8018" stroke-width="0.8" /><path d="M20 193H23.5M22 191V195" fill="none" stroke="#fff8d0" stroke-width="1" /><rect x="7" y="205" width="17" height="18" rx="0" fill="#8ab4dc" stroke="#1f3c64" stroke-width="1" /><path d="M7 205L24 214M24 205L7 214M7 214H24M15.5 214V223" fill="none" stroke="#1f3c64" stroke-width="0.9" /><rect x="18" y="216" width="7" height="7" rx="0" fill="#e2c430" stroke="#9c8018" stroke-width="0.8" /><path d="M20 220H23M22 218V221" fill="none" stroke="#fff8d0" stroke-width="1" /><rect x="8" y="232" width="16" height="18" rx="0" fill="#b8cfe0" stroke="#7a9ab8" stroke-width="0.6" /><path d="M10 234L14 245L20 234" fill="none" stroke="#222" stroke-width="1.2" /><rect x="19" y="243" width="6.5" height="7" rx="0" fill="#e2c430" stroke="#9c8018" stroke-width="0.8" /><path d="M21 247H23.5M23 245V248" fill="none" stroke="#fff8d0" stroke-width="1" /><rect x="13" y="260.0" width="8" height="1.3" rx="0" fill="#a4a4a0" /><path d="M8 269V280Q16 285 24 280V269Z" fill="#5b8fc9" stroke="#2f5d92" stroke-width="0.6" /><path d="M8 269Q16 264 24 269Q16 274 8 269Z" fill="#b8d0e8" /><path d="M8 274Q16 278 24 274M8 278Q16 282 24 278" fill="none" stroke="#a8c8e8" stroke-width="0.7" /><rect x="13" y="293.4" width="8" height="1.3" rx="0" fill="#a4a4a0" /><g opacity="1"><path d="M9 302.5H24V310.5H9L6 306.5Z" fill="#f0dc50" stroke="#a88a18" stroke-width="0.8" /><text x="9.5" y="308.9" font-family="Liberation Sans" font-weight="bold" font-size="8" textLength="13" lengthAdjust="spacingAndGlyphs" fill="#111">abc</text></g><rect x="8" y="327" width="7" height="7" rx="0" fill="#60a840" /><rect x="11" y="327" width="6" height="5" rx="0" fill="#f0d848" /><rect x="14" y="332" width="5" height="6" rx="0" fill="#c85820" /><rect x="17" y="335" width="4" height="9" rx="0" fill="#3a9a3a" /><rect x="12" y="338" width="5" height="6" rx="0" fill="#f0d848" /><rect x="21" y="339" width="3" height="5" rx="0" fill="#c85820" /><rect x="13" y="350.4" width="8" height="1.3" rx="0" fill="#a4a4a0" /><g opacity="1"><path d="M10 360.5H23V368.0H10L7 364.25Z" fill="#dceaf6" stroke="#4a8ad0" stroke-width="0.8" /><text x="10.5" y="366.4" font-family="Liberation Sans" font-weight="bold" font-size="7.5" textLength="11" lengthAdjust="spacingAndGlyphs" fill="#111">abc</text></g><circle cx="22" cy="371" r="3" fill="#d0501c"/><g opacity="1"><path d="M10 387H24V395H10L7 391.0Z" fill="#f8e0c0" stroke="#d0501c" stroke-width="0.8" /><text x="10.5" y="393.4" font-family="Liberation Sans" font-weight="bold" font-size="8" textLength="12" lengthAdjust="spacingAndGlyphs" fill="#111">abc</text></g><rect x="13" y="408.0" width="8" height="1.3" rx="0" fill="#5e5e5b" /><g opacity="0.9"><path d="M10 419H22V425.5H10L7 422.25Z" fill="#8c8e88" stroke="#9a9c96" stroke-width="0.8" /><text x="10.5" y="423.9" font-family="Liberation Sans" font-weight="bold" font-size="6.5" textLength="10" lengthAdjust="spacingAndGlyphs" fill="#6a6a66">abc</text></g><path d="M18 427v5" fill="none" stroke="#9a9c96" stroke-width="1.3" /><g opacity="0.9"><path d="M10 445.5H22V452.0H10L7 448.75Z" fill="#8c8e88" stroke="#9a9c96" stroke-width="0.8" /><text x="10.5" y="450.4" font-family="Liberation Sans" font-weight="bold" font-size="6.5" textLength="10" lengthAdjust="spacingAndGlyphs" fill="#6a6a66">abc</text></g><path d="M16 458q3-3 6 0q-3 3-6 0" fill="none" stroke="#9a9c96" stroke-width="1.3" /><g opacity="0.9"><path d="M10 473H22V479.5H10L7 476.25Z" fill="#8c8e88" stroke="#9a9c96" stroke-width="0.8" /><text x="10.5" y="477.9" font-family="Liberation Sans" font-weight="bold" font-size="6.5" textLength="10" lengthAdjust="spacingAndGlyphs" fill="#6a6a66">abc</text></g><path d="M16 483h6M20 481l2 2-2 2" fill="none" stroke="#9a9c96" stroke-width="1.3" /><g opacity="0.9"><path d="M10 500H22V506.5H10L7 503.25Z" fill="#8c8e88" stroke="#9a9c96" stroke-width="0.8" /><text x="10.5" y="504.9" font-family="Liberation Sans" font-weight="bold" font-size="6.5" textLength="10" lengthAdjust="spacingAndGlyphs" fill="#6a6a66">abc</text></g><path d="M22 510a3 3 0 1 1-3-3" fill="none" stroke="#9a9c96" stroke-width="1.3" /><g opacity="0.9"><path d="M10 526.5H22V533.0H10L7 529.75Z" fill="#8c8e88" stroke="#9a9c96" stroke-width="0.8" /><text x="10.5" y="531.4" font-family="Liberation Sans" font-weight="bold" font-size="6.5" textLength="10" lengthAdjust="spacingAndGlyphs" fill="#6a6a66">abc</text></g><path d="M16 539l6-5" fill="none" stroke="#9a9c96" stroke-width="1.3" /><rect x="13" y="550.4" width="8" height="1.3" rx="0" fill="#a4a4a0" /><path d="M3 571L7 562L11 571M4.5 568H9.5" fill="none" stroke="#3a7ac8" stroke-width="1.8" /><line x1="2" y1="560" x2="10" y2="560" stroke="#222" stroke-width="0.8" /><path d="M13 560L15 562L18 557" fill="none" stroke="#4a8ad0" stroke-width="1" /><rect x="13" y="568" width="7" height="7" rx="0" fill="#e2c430" stroke="#9c8018" stroke-width="0.8" /><path d="M15 572H18M17 570V573" fill="none" stroke="#fff8d0" stroke-width="1" /><path d="M26.5 564.5H31.5L29 567.5Z" fill="#a4a4a0" /><path d="M10 584V597L13 594L16 600L18 599L15 593H19Z" fill="#f6f6f4" stroke="#1a1a1a" stroke-width="0.8" /><circle cx="9" cy="585" r="0.5" fill="#f6f6f4"/><circle cx="21" cy="585" r="0.5" fill="#f6f6f4"/><path d="M9 612H22L15 625L9 622Z" fill="none" stroke="#111" stroke-width="0.9" /><rect x="7.5" y="610.5" width="3" height="3" rx="0" fill="#3a8ce0" /><rect x="20.5" y="610.5" width="3" height="3" rx="0" fill="#3a8ce0" /><rect x="7.5" y="620.5" width="3" height="3" rx="0" fill="#3a8ce0" /><rect x="13.5" y="623.5" width="3" height="3" rx="0" fill="#3a8ce0" /><path d="M21 621V627M18 624H24" fill="none" stroke="#e8f0e8" stroke-width="1.3" /><circle cx="21" cy="626" r="0.8" fill="#3a3"/><path d="M22 640Q12 636 9 645Q12 653 15 653" fill="none" stroke="#111" stroke-width="0.9" /><rect x="9.5" y="637.5" width="3" height="3" rx="0" fill="#3a8ce0" /><rect x="20.5" y="638.5" width="3" height="3" rx="0" fill="#3a8ce0" /><rect x="7.5" y="643.5" width="3" height="3" rx="0" fill="#3a8ce0" /><rect x="13.5" y="651.5" width="3" height="3" rx="0" fill="#3a8ce0" /><path d="M21 648V654M18 651H24" fill="none" stroke="#e8f0e8" stroke-width="1.3" /><path d="M15 665L17.5 670.5L23 671L19 675L20 681L15 678L10 681L11 675L7 671L12.5 670.5Z" fill="#f8dc90" stroke="#c8a850" stroke-width="0.6" /><path d="M21 676V682M18 679H24" fill="none" stroke="#e8f0e8" stroke-width="1.3" /><path d="M11 693H20V696M15.5 693V704M13 704H18M11 693V696" fill="none" stroke="#f4f4f4" stroke-width="1.6" /><circle cx="9" cy="706" r="0.8" fill="#ccc"/><path d="M21 702V708M18 705H24" fill="none" stroke="#e8f0e8" stroke-width="1.3" /><rect x="13" y="714.4" width="8" height="1.3" rx="0" fill="#a4a4a0" /><path d="M2 722H19V735H8L3 739L5 735H2Z" fill="#f0f0ee" stroke="#bbb" stroke-width="0.6" /><path d="M6 725H15M10.5 725V733M8.5 733H12.5" fill="none" stroke="#111" stroke-width="1.5" /><path d="M26.5 729.5H31.5L29 732.5Z" fill="#a4a4a0" /><path d="M255 447L258 446L262 452Q265 453 264 456L258 457Q255 456 256 453Z" fill="#f0d848" stroke="#a08018" stroke-width="0.6" /><rect x="258" y="450" width="4" height="3" rx="0" fill="#d04020" /><path d="M276 447L283 452L276 457Z" fill="#3a9a3a" stroke="#7ab070" stroke-width="0.5" /><rect x="290.5" y="447" width="1.2" height="10" rx="0" fill="#50504e" /><rect x="294" y="442" width="19.5" height="19.5" rx="3" fill="none" stroke="#e6e6e4" stroke-width="1.1" /><rect x="299" y="446" width="10" height="13" rx="0" fill="#f6f6f4" stroke="#777" stroke-width="0.6" /><path d="M301 449H306M301 452H307M301 455H307" fill="none" stroke="#555" stroke-width="0.8" /><rect x="305" y="454" width="4" height="4" rx="0" fill="#d0501c" /><rect x="315.5" y="447" width="1.2" height="10" rx="0" fill="#50504e" /><path d="M323 448L326 447L327 450L333 456L332 457L326 451L323 450Z" fill="#f0f0ee" stroke="#555" stroke-width="0.5" /><line x1="329" y1="453" x2="334" y2="458" stroke="#f0d848" stroke-width="2" /><rect x="343" y="447" width="15" height="12" rx="0" fill="#5a8fc8" stroke="#1d2a38" stroke-width="0.8" /><rect x="343" y="447" width="4" height="12" rx="0" fill="#22303a" /><path d="M350 450Q350 449 351.5 449Q353 449 353 450.5Q353 452 351.5 452.5V454" fill="none" stroke="#f6f6f4" stroke-width="1" /><path d="M354.5 456.5H359.5L357 459.5Z" fill="#a4a4a0" /><path d="M716 447H721L722 448H727V450H716Z" fill="#d8c038" /><path d="M716 450H729L727.5 456H716Z" fill="#f0d848" stroke="#a88a18" stroke-width="0.6" /><rect x="719" y="445" width="5" height="3" rx="0" fill="#5b8fc9" /><rect x="738" y="445" width="8" height="11" rx="0" fill="#f6f6f4" stroke="#777" stroke-width="0.5" /><path d="M739.5 448H744M739.5 450.5H744M739.5 453H744" fill="none" stroke="#555" stroke-width="0.7" /><rect x="743" y="452" width="4" height="4" rx="0" fill="#d0501c" /><rect x="754.5" y="447" width="1.2" height="9" rx="0" fill="#a0a09c" /><rect x="763" y="446" width="9" height="11" rx="0" fill="#8a8a86" /><rect x="764.5" y="447" width="6" height="3" rx="0" fill="#999995" /><rect x="783" y="446" width="9" height="11" rx="0" fill="#5b8fc9" stroke="#2f5d92" stroke-width="0.5" /><rect x="784.5" y="447" width="6" height="3" rx="0" fill="#f6f6f4" /><rect x="785" y="452" width="5" height="4" rx="0" fill="#f6f6f4" /><circle cx="791" cy="456" r="1.5" fill="#3a3"/><rect x="799.5" y="447" width="1.2" height="9" rx="0" fill="#a0a09c" /><path d="M808 447L815 451.5L808 456Z" fill="#5aa05a" stroke="#8ab884" stroke-width="0.5" /><rect x="822.5" y="447" width="1.2" height="9" rx="0" fill="#a0a09c" /><path d="M831 450L837 452L840 447M833 455L837 452L839 456" fill="none" stroke="#ddd" stroke-width="1" /><rect x="838" y="448" width="3" height="7" rx="0" fill="#d0501c" /><rect x="855" y="448" width="6" height="8" rx="0" fill="#e6e6e4" stroke="#777" stroke-width="0.5" /><rect x="858" y="446" width="5" height="7" rx="0" fill="#f6f6f4" stroke="#777" stroke-width="0.5" /><rect x="875" y="446" width="8" height="11" rx="0" fill="#f0f0ee" stroke="#c89040" stroke-width="0.8" /><path d="M877 449H881M877 451.5H881M877 454H881" fill="none" stroke="#555" stroke-width="0.7" /><rect x="891.5" y="447" width="1.2" height="9" rx="0" fill="#a0a09c" /><circle cx="902" cy="450" r="3.3" fill="#f6f6f4" stroke="#777" stroke-width="0.6"/><line x1="904" y1="453" x2="907" y2="456" stroke="#222" stroke-width="1.6" /><rect x="912.5" y="447" width="1.2" height="9" rx="0" fill="#a0a09c" /><path d="M924.5 446L923 457M928.5 446L927 457M921.5 449.5H931M921 453.5H930.5" fill="none" stroke="#8a8a86" stroke-width="1.1" /><line x1="941" y1="458" x2="950" y2="448" stroke="#111" stroke-width="1.8" /><path d="M950 444V452M946 448H954M947 445L953 451M953 445L947 451" fill="none" stroke="#f6f6f4" stroke-width="0.7" /><rect x="959.5" y="447" width="1.2" height="9" rx="0" fill="#a0a09c" /><rect x="967" y="447" width="9" height="9" rx="0" fill="none" stroke="#7d7d7a" stroke-width="0.8" /><rect x="1056.5" y="425.5" width="7" height="7" rx="2" fill="none" stroke="#333" stroke-width="0.8" /><path d="M1058 427L1062 431M1062 427L1058 431" fill="none" stroke="#222" stroke-width="1" /><path d="M723 470.5V477.5M719.5 474H726.5" fill="none" stroke="#8aa88a" stroke-width="2" /><path d="M723 471.5V476.5M720.5 474H725.5" fill="none" stroke="#c8d8c8" stroke-width="0.8" /><rect x="752" y="467" width="9" height="12" rx="0" fill="#f6f6f4" stroke="#777" stroke-width="0.5" /><path d="M753.5 470H758M753.5 472.5H759M753.5 475H759" fill="none" stroke="#444" stroke-width="0.8" /><rect x="757" y="466" width="5" height="5" rx="0" fill="#4a8ad0" /><path d="M1046 471H1058L1052 477.5Z" fill="#3a3a38" /><path d="M1059 476H1063L1061 479Z" fill="#e0e0dc" /><circle cx="1082" cy="90.5" r="0.7" fill="#ddd"/><circle cx="1085" cy="86" r="0.7" fill="#ddd"/><circle cx="1088" cy="85" r="0.7" fill="#ddd"/><path d="M1083 122L1087 118L1092 120L1090 124L1085 125Z" fill="#d8b898" /><path d="M1083 123L1089 125L1085 126Z" fill="#d3502a" /><circle cx="1085" cy="119" r="1.6" fill="#5a9ad8"/><path d="M1090 119L1099 114L1097 120Z" fill="#e0c838" /><g opacity="1"><path d="M1086 139H1099V147H1086L1083 143.0Z" fill="#f0dc50" stroke="#a88a18" stroke-width="0.8" /><text x="1086.5" y="145.4" font-family="Liberation Sans" font-weight="bold" font-size="8" textLength="11" lengthAdjust="spacingAndGlyphs" fill="#111">abc</text></g><rect x="1082" y="161.5" width="18" height="9" rx="4" fill="#f6f6f4" stroke="#333" stroke-width="0.8" /><text x="1084" y="169" font-family="Liberation Sans" font-weight="bold" font-size="9" textLength="14" lengthAdjust="spacingAndGlyphs" fill="#111">abc</text><path d="M1083 186L1091 183L1099 186L1091 189Z" fill="#c0a890" stroke="#533" stroke-width="0.5" /><path d="M1083 186L1091 189V199L1083 195Z" fill="#8ac840" stroke="#2a5a10" stroke-width="0.5" /><path d="M1091 189L1099 186V195L1091 199Z" fill="#f0d848" stroke="#6a5a10" stroke-width="0.5" /><path d="M1084 211Q1090 205 1098 208L1098 212H1084Z" fill="#b8b8b4" /><line x1="1158.5" y1="153" x2="1158.5" y2="160" stroke="#8a8a88" stroke-width="0.8" /><line x1="1112" y1="192.5" x2="1126" y2="192.5" stroke="#8a8a88" stroke-width="0.8" /><path d="M1121 117H1128M1121 123.5H1128M1121 130H1128" fill="none" stroke="#3ab03a" stroke-width="2.2" /><rect x="1120.5" y="116.5" width="8" height="15" rx="0" fill="none" stroke="#184030" stroke-width="0.6" /><path d="M1114 716L1117 715L1121 720Q1123 722 1120 724L1117 722Z" fill="#e06020" /><circle cx="1116" cy="717" r="1.5" fill="#f0d848"/><path d="M1140 722Q1140 716 1144 716Q1148 716 1148 720Q1148 724 1143 724" fill="none" stroke="#5a9a5a" stroke-width="1.6" opacity=".8"/></svg>
<div class="t" style="left:1006px;top:40px;font-size:13px;color:#8c8c88">12</div>
<div class="t" style="left:1085px;top:40px;font-size:13px;color:#8c8c88">px</div>
<div style="left:0px;top:759px;width:207px;height:6px;border:1px solid #2e2e2c;border-radius:3px;box-sizing:border-box"></div>
<div style="left:797px;top:759px;width:66px;height:6px;border:1px solid #2e2e2c;border-radius:3px;box-sizing:border-box"></div>
<div style="left:921px;top:759px;width:72px;height:6px;border:1px solid #2e2e2c;border-radius:3px;box-sizing:border-box"></div>
<div style="left:1067px;top:759px;width:70px;height:6px;border:1px solid #2e2e2c;border-radius:3px;box-sizing:border-box"></div>
<div style="left:1190px;top:759px;width:70px;height:6px;border:1px solid #2e2e2c;border-radius:3px;box-sizing:border-box"></div>
<div class="t" style="left:1111px;top:540px;font-size:9px;color:#333">[</div>
<div style="left:386px;top:156px;width:64px;height:64px;border-radius:50%;background:#26e0a6;box-shadow:3px 4px 6px rgba(0,0,0,.8)"></div>
<div class="t" style="left:405px;top:173px;font-size:30px;color:#fff;-webkit-text-stroke:.7px #26e0a6;transform:scaleX(.75);transform-origin:0 0">35</div>
<div style="left:613px;top:212px;width:600px;height:187px;background:#1f1e28;border-radius:8px 0 0 0;overflow:hidden;box-shadow:0 1px 6px rgba(0,0,0,.25)"><div style="left:452px;top:70px;width:148px;height:117px;background:#1b1a24"></div><div style="left:462px;top:70px;width:30px;height:117px;background:#191822"></div><div style="left:0;top:0;width:600px;height:37px;background:#2b2b2b"></div><div style="left:0;top:37px;width:600px;height:1px;background:#232323"></div><div style="left:0;top:38px;width:600px;height:32px;background:#313131"></div><div style="left:0;top:69px;width:600px;height:1px;background:#252525"></div><div style="left:6px;top:6px;width:27px;height:26px;background:#303030;border:1px solid #383838;border-radius:6px;box-sizing:border-box"></div><svg style="left:6px;top:6px" width="27" height="26"><path d="M11.5 11.5H17.5V18.5" fill="none" stroke="#d8d8d8" stroke-width="1"/><path d="M13 16V20M11 18H15" stroke="#d8d8d8" stroke-width="1"/><circle cx="8.5" cy="19.5" r=".7" fill="#d8d8d8"/></svg><div class="t" style="left:512px;top:84px;font-size:11px;letter-spacing:.45px;color:#181720">Font family</div><div class="t" style="left:512px;top:110px;font-size:12px;letter-spacing:.3px;color:#181720">Cantarell</div><div class="t" style="left:512px;top:136px;font-size:11px;letter-spacing:.45px;color:#181720">Size</div><div class="t" style="left:512px;top:162px;font-size:11px;letter-spacing:.45px;color:#181720">Fill color</div><div class="t" style="left:439px;top:14px;font-size:11.3px;font-weight:bold;color:#d6d6d6">webmaster@webmaster-tuf: ~/dev/cpp/bm-qt5</div><div class="t" style="left:183px;top:49px;font-size:12.2px;color:#8a8a8a">webmaster@webmaster-tuf: ~/dev/cpp/bm-qt5</div><div class="t m" style="left:1px;top:74.0px;font-size:12px;color:#d4d4d4">b'30\n'</div><div class="t m" style="left:1px;top:88.3px;font-size:12px;color:#d4d4d4">b'31\n'</div><div class="t m" style="left:1px;top:102.7px;font-size:12px;color:#d4d4d4">b'32\n'</div><div class="t m" style="left:1px;top:117.0px;font-size:12px;color:#d4d4d4">b'33\n'</div><div class="t m" style="left:1px;top:131.4px;font-size:12px;color:#d4d4d4">b'34\n'</div><div class="t m" style="left:1px;top:145.8px;font-size:12px;color:#d4d4d4">b'35\n'</div><div class="t m" style="left:1px;top:160.1px;font-size:12px;color:#d4d4d4">b'36\n'</div><div style="left:1px;top:170px;width:7px;height:15px;border:1px solid #ddd;box-sizing:border-box"></div></div>
</body></html>
